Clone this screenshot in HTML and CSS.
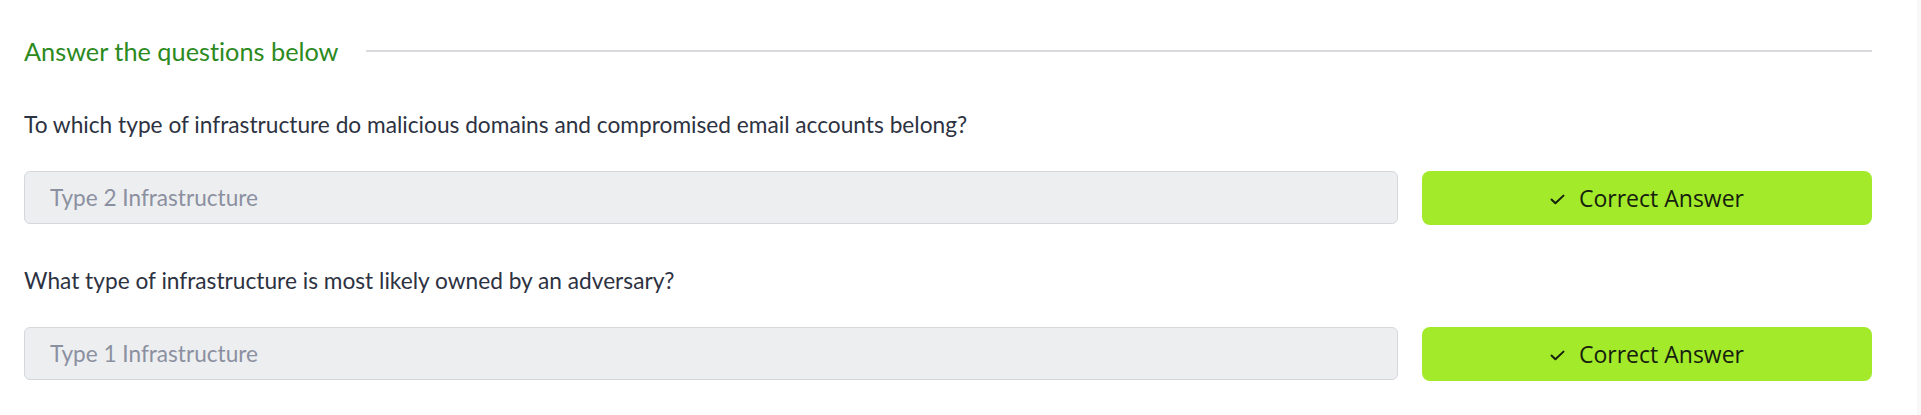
FILE: index.html
```html
<!DOCTYPE html>
<html lang="en">
<head>
<meta charset="utf-8">
<title>Answer the questions below</title>
<link rel="stylesheet" href="styles.css">
</head>
<body>
<div class="frame">
  <main class="main">
    <div class="heading-row">
      <h2 class="heading">Answer the questions below</h2>
      <span class="rule"></span>
    </div>

    <section class="qa qa-first">
      <p class="question">To which type of infrastructure do malicious domains and compromised email accounts belong?</p>
      <div class="answer-row">
        <div class="answer-input">Type 2 Infrastructure</div>
        <button class="correct-btn" type="button">
          <svg class="check" width="15" height="11" viewBox="0 0 15 11" aria-hidden="true"><path d="M1.5 5.6 L5.4 9.3 L13.5 1.6" fill="none" stroke="currentColor" stroke-width="2" stroke-linecap="round" stroke-linejoin="round"/></svg>
          <span>Correct Answer</span>
        </button>
      </div>
    </section>

    <section class="qa">
      <p class="question">What type of infrastructure is most likely owned by an adversary?</p>
      <div class="answer-row">
        <div class="answer-input">Type 1 Infrastructure</div>
        <button class="correct-btn" type="button">
          <svg class="check" width="15" height="11" viewBox="0 0 15 11" aria-hidden="true"><path d="M1.5 5.6 L5.4 9.3 L13.5 1.6" fill="none" stroke="currentColor" stroke-width="2" stroke-linecap="round" stroke-linejoin="round"/></svg>
          <span>Correct Answer</span>
        </button>
      </div>
    </section>
  </main>
  <div class="scroll-strip"></div>
</div>
</body>
</html>
```

FILE: styles.css
```css
html, body {
  margin: 0;
  padding: 0;
  background: #ffffff;
}

.frame {
  display: flex;
  width: 1921px;
  height: 415px;
  overflow: hidden;
}

.main {
  flex: 1;
  padding: 36px 45px 0 24px;
  font-family: "Lato", "Open Sans", sans-serif;
  font-variant-ligatures: none;
}

.scroll-strip {
  width: 4px;
  background: #f8f8f8;
}

.heading-row {
  display: flex;
  align-items: center;
  gap: 27px;
  height: 30px;
}

.heading {
  margin: 0;
  font-size: 25.3px;
  font-weight: 400;
  line-height: 30px;
  color: #2c8a1e;
  white-space: nowrap;
}

.rule {
  flex: 1;
  height: 2px;
  background: #d9dade;
}

.qa {
  margin-top: 42px;
}

.qa-first {
  margin-top: 44px;
}

.question {
  margin: 0;
  font-size: 22.7px;
  line-height: 30px;
  color: #2d3242;
  white-space: nowrap;
}

.answer-row {
  display: grid;
  grid-template-columns: 1fr 450px;
  gap: 24px;
  margin-top: 31px;
  height: 53px;
}

.answer-input {
  display: flex;
  align-items: center;
  box-sizing: border-box;
  height: 53px;
  padding-left: 25px;
  background: #edeef0;
  border: 1px solid #d5d7db;
  border-radius: 6px;
  font-size: 22.6px;
  color: #8b90a0;
}

.correct-btn {
  display: flex;
  align-items: center;
  justify-content: center;
  gap: 14px;
  height: 54px;
  padding: 0;
  border: none;
  border-radius: 8px;
  background: #a3ea2a;
  color: #16200e;
  font-family: "Open Sans", "Noto Sans", sans-serif;
  font-size: 23px;
  cursor: pointer;
}

.check {
  display: block;
  margin-top: 2px;
}
```
